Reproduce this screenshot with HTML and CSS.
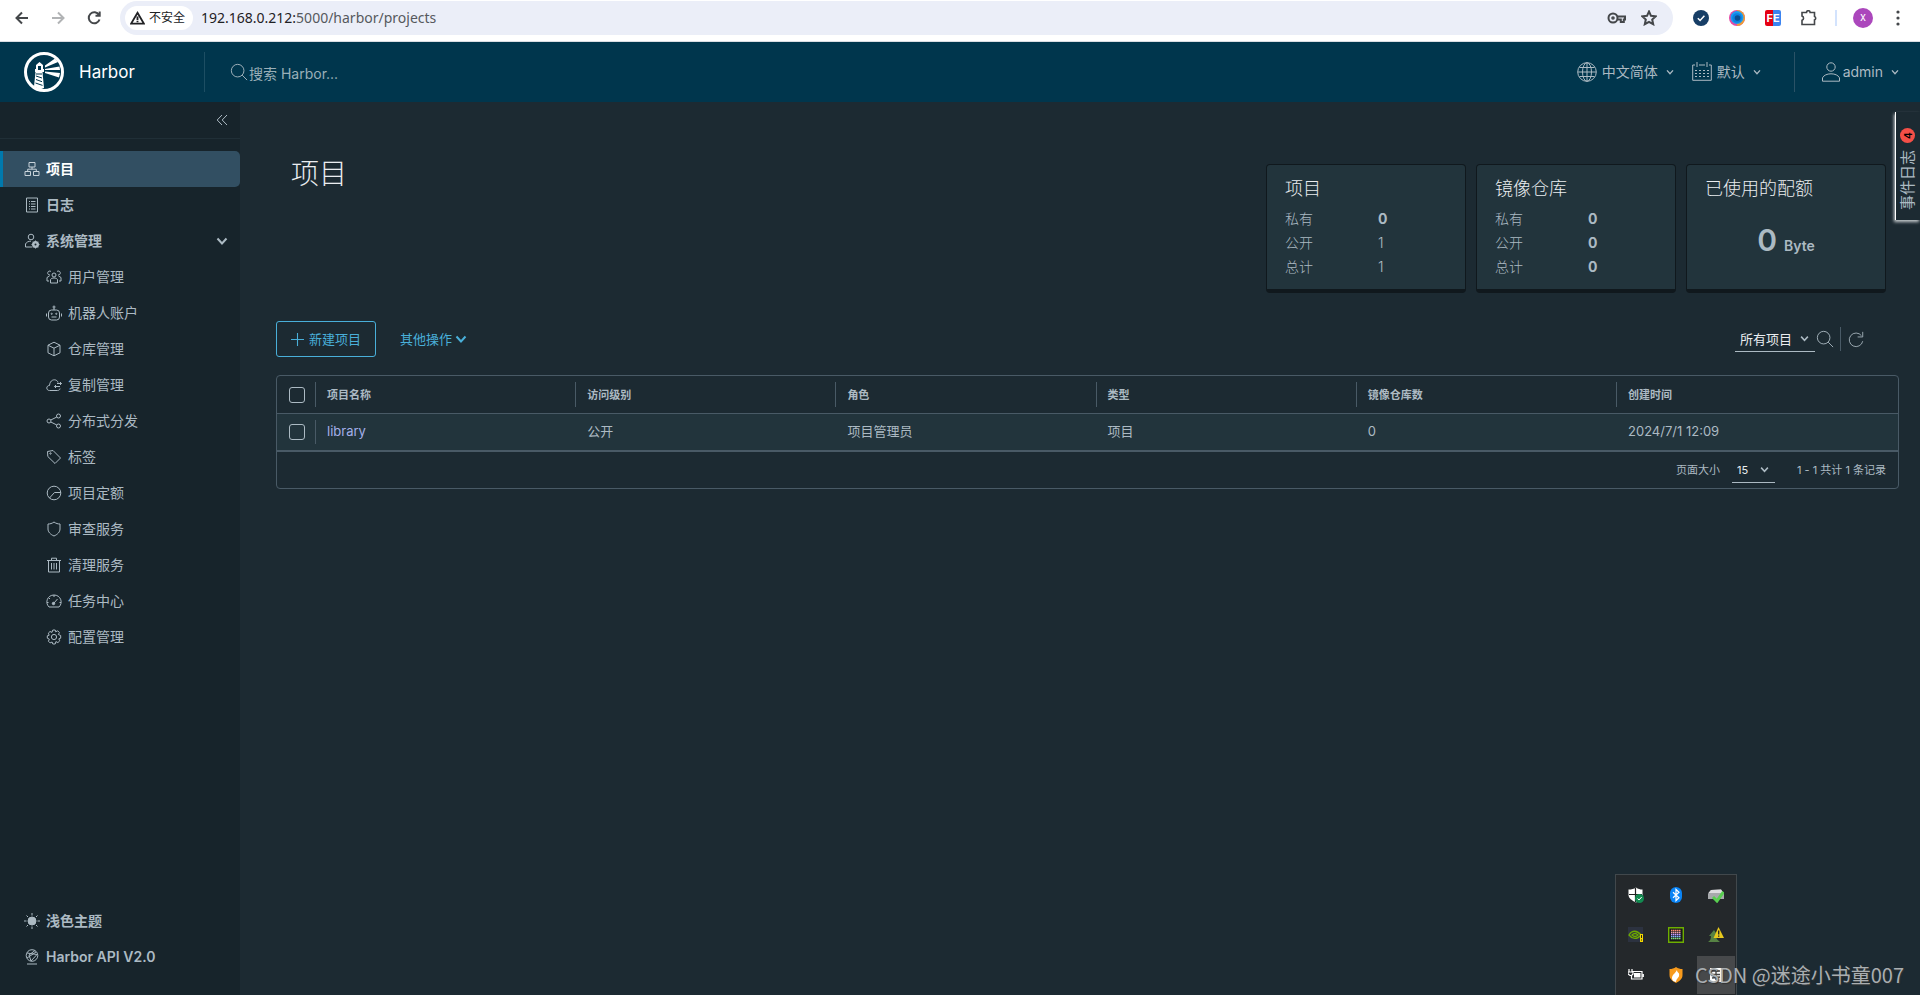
FILE: index.html
```html
<!DOCTYPE html>
<html lang="zh-CN">
<head>
<meta charset="utf-8">
<title>Harbor</title>
<link rel="stylesheet" href="styles.css">
</head>
<body>
<svg class="defs" aria-hidden="true">
  <symbol id="chev" viewBox="0 0 12 12"><path d="M1.5 3.5 6 8.5 10.500 3.500"/></symbol>
  <symbol id="search" viewBox="0 0 20 20"><circle cx="8.500" cy="8.500" r="7"/><path d="M13.500 13.500 19 19"/></symbol>
</svg>

<div class="browser">
  <button class="nav" aria-label="后退"><svg viewBox="0 0 16 16"><path d="M14 8H3M8 2.500 2.500 8 8 13.500"/></svg></button>
  <button class="nav off" aria-label="前进"><svg viewBox="0 0 16 16"><path d="M2 8h11M8 2.500 13.500 8 8 13.500"/></svg></button>
  <button class="nav" aria-label="刷新"><svg viewBox="0 0 16 16"><path d="M13 5A5.500 5.500 0 1 0 13.500 9.500M13.700 1.500v4.200H9.500"/></svg></button>
  <div class="omnibox">
    <button class="chip"><svg viewBox="0 0 16 14"><path d="M8 1.500 14.800 13H1.200ZM8 5.500v3.500M8 10v1.500"/></svg>不安全</button>
    <span class="url"><b>192.168.0.212:</b>5000/harbor/projects</span>
    <svg class="key" viewBox="0 0 20 14"><circle cx="6" cy="7" r="4.500"/><circle cx="6" cy="7" r=".8"/><path d="M10.500 5.500H18v3h-1.200V11h-3V8.500h-3.300"/></svg>
    <svg class="star" viewBox="0 0 16 16"><path d="m8 1.500 2 4.300 4.700.5-3.500 3.200 1 4.700L8 11.800l-4.200 2.400 1-4.700L1.300 6.300 6 5.800Z"/></svg>
  </div>
  <div class="exts">
    <svg viewBox="0 0 16 16"><circle cx="8" cy="8" r="8" fill="#173e66"/><path d="m4.800 8.200 2.300 2.300 4.300-4.700" stroke="#fff" stroke-width="1.500" fill="none"/></svg>
    <svg viewBox="0 0 16 16"><circle cx="8" cy="8" r="8" fill="#e34aa5"/><path d="M8 0a8 8 0 0 1 0 16Z" fill="#ee9c35"/><circle cx="8" cy="7.500" r="6.500" fill="#1d9bf0"/><circle cx="8" cy="8" r="4.800" fill="#0b7fe0"/><circle cx="8.500" cy="8" r="2.800" fill="#0a4d92"/></svg>
    <span class="fe">FE</span>
    <svg viewBox="0 0 16 16"><path d="M1 2.500h4.500a1.800 1.800 0 0 1 3.600 0h4.400v4a1.800 1.800 0 0 1 0 3.400v4.600H1v-4.200a2.200 2.200 0 0 0 0-4.200Z" stroke="#44474a" stroke-width="1.600" fill="none"/></svg>
    <i class="bar"></i>
    <span class="avatar">x</span>
    <svg class="dots" viewBox="0 0 4 16"><circle cx="2" cy="2" r="1.600"/><circle cx="2" cy="8" r="1.600"/><circle cx="2" cy="14" r="1.600"/></svg>
  </div>
</div>

<header class="top">
  <a class="brand" href="#">
    <svg class="logo" viewBox="0 0 40 40"><circle cx="20" cy="20" r="18.500" fill="none" stroke="#fff" stroke-width="3"/><path d="M11 17h1v-4l3.500-3 3.500 3v4h1v3h-1.500l1.500 16-4 1.500-6-3 1.500-14.500H11Z" fill="#fff"/><path d="M14 14h3v4h-3Z" fill="#00364d"/><path d="m12 24 6 2M12 27.500l6 2.200M11.500 31l7 2.400M12 22h6" stroke="#00364d"/><path d="M21 13.500 31 6.500l3 3.500L21 15.500ZM21 17l14.500-2.500.5 3.500H21ZM21 19.500 36 21l-1 4.500-14-4.500Z" fill="#fff"/></svg>
    <span>Harbor</span>
  </a>
  <label class="find"><svg><use href="#search"/></svg><input type="text" placeholder="搜索 Harbor..." aria-label="搜索 Harbor"></label>
  <div class="opts">
    <button><svg viewBox="0 0 20 20"><circle cx="10" cy="10" r="9.300"/><ellipse cx="10" cy="10" rx="4.500" ry="9.300"/><path d="M10 1v18M1 10h18M2.500 5.500h15M2.500 14.500h15"/></svg><span>中文简体</span><svg class="cv"><use href="#chev"/></svg></button>
    <button><svg viewBox="0 0 20 20"><path d="M3 3H.7v15.300h18.600V3H17M7 3h6M5 0v5M15 0v5"/><path stroke-dasharray="2 2" d="M3 8.500h14M3 11.500h14M3 14.500h14"/></svg><span>默认</span><svg class="cv"><use href="#chev"/></svg></button>
    <button class="user"><svg viewBox="0 0 20 20"><circle cx="10" cy="5" r="4.200"/><path d="M1.500 19.200v-3.400c1.200-2.500 4.500-4 8.500-4s7.300 1.500 8.500 4v3.400Z"/></svg><span>admin</span><svg class="cv"><use href="#chev"/></svg></button>
  </div>
</header>

<div class="body">
  <nav class="side">
    <button class="fold" aria-label="收起"><svg viewBox="0 0 12 12"><path d="M6 1 1.200 6 6 11M11 1 6.200 6 11 11"/></svg></button>
    <a class="item on" href="#"><svg viewBox="0 0 16 16"><path d="M5 1.500h6v4.500H5ZM1 10.500h5.500v4H1ZM9.500 10.500H15v4H9.500ZM8 6v2.200M3.700 10.500V8.200h8.600v2.300"/></svg>项目</a>
    <a class="item" href="#"><svg viewBox="0 0 16 16"><path d="M2.500 1h11v14h-11ZM5 4.500h1M5 7h1M5 9.500h1M5 12h1M7 4.500h4.500M7 7h4.500M7 9.500h4.500M7 12h4.500"/></svg>日志</a>
    <a class="item" href="#"><svg viewBox="0 0 16 16"><circle cx="7" cy="4" r="2.800"/><path d="M8 14H1.500v-3C2.500 9 4.500 8.200 7 8.200"/><circle cx="11.500" cy="11.500" r="2.500" stroke-width="2"/><path d="M11.500 7.500v8M7.500 11.500h8M8.800 8.800l5.400 5.400M14.200 8.800l-5.400 5.400"/><circle cx="11.500" cy="11.500" r="1" fill="#17242b" stroke="none"/></svg>系统管理<svg class="open"><use href="#chev"/></svg></a>
    <a class="item sub" href="#"><svg viewBox="0 0 16 16"><circle cx="8" cy="6" r="2"/><path d="M4.500 14v-3.500C5.500 9.300 6.500 9 8 9s2.500.3 3.500 1.500V14ZM5 2.500a2 2 0 1 0-1 3.500M11 2.500A2 2 0 1 1 12 6M3 12H1V8.500L3.500 7M13 12h2V8.500L12.500 7"/></svg>用户管理</a>
    <a class="item sub" href="#"><svg viewBox="0 0 16 16"><rect x="2.500" y="5" width="11" height="10" rx="3"/><path d="M8 5V3M.5 8.500v3M15.500 8.500v3M5.500 12h5"/><circle cx="8" cy="2" r="1"/><circle cx="5.700" cy="8.800" r=".6"/><circle cx="10.300" cy="8.800" r=".6"/></svg>机器人账户</a>
    <a class="item sub" href="#"><svg viewBox="0 0 16 16"><path d="m8 1.200 6 3v7.600l-6 3-6-3V4.200ZM2 4.200l6 3 6-3M8 7.200v7.600"/></svg>仓库管理</a>
    <a class="item sub" href="#"><svg viewBox="0 0 16 16"><path d="M14 11.500c0 1-1 2-2.500 2H3.500c-3.600 0-3.600-5 0-5C4 1.500 11 1.500 12 5.500M15.500 6.500H11M14 5l1.500 1.500L14 8M14 9.500H8.500M10 8 8.500 9.500 10 11"/></svg>复制管理</a>
    <a class="item sub" href="#"><svg viewBox="0 0 16 16"><circle cx="3" cy="8" r="2"/><circle cx="12.500" cy="3" r="2"/><circle cx="12.500" cy="13" r="2"/><path d="m4.800 7 6-3M4.800 9l6 3"/></svg>分布式分发</a>
    <a class="item sub" href="#"><svg viewBox="0 0 16 16"><path d="M1.500 2.500 7 1.500 14.500 9 9 14.500 1.800 7.500Z"/><circle cx="4.500" cy="4.500" r=".7"/></svg>标签</a>
    <a class="item sub" href="#"><svg viewBox="0 0 16 16"><circle cx="8" cy="8" r="6.800"/><path d="M14.800 7.500H8.500L3.500 13"/></svg>项目定额</a>
    <a class="item sub" href="#"><svg viewBox="0 0 16 16"><path d="M8 1c2 1.500 4 2 6 2v5c0 3-2.500 5.500-6 7-3.500-1.500-6-4-6-7V3c2 0 4-.5 6-2Z"/></svg>审查服务</a>
    <a class="item sub" href="#"><svg viewBox="0 0 16 16"><path d="M1 3.500h14M5.500 3.500V1.200h5v2.300M2.500 3.500V15h11V3.500M5.500 6v6.500M8 6v6.500M10.500 6v6.500"/></svg>清理服务</a>
    <a class="item sub" href="#"><svg viewBox="0 0 16 16"><path d="M3 14C-1.500 9.500 1.500 2 8 2s9.500 7.500 5 12ZM8 2v2M3 5l1 1M1 9.500h1.500M13.500 9.500H15M8 10l3.500-4"/><circle cx="7.500" cy="10.500" r="1.200" fill="#acbac3"/></svg>任务中心</a>
    <a class="item sub" href="#"><svg viewBox="0 0 16 16"><circle cx="8" cy="8" r="2.600"/><path d="m6.800 1 2.400 0 .5 1.800 2-1 1.700 1.700-1 2L14.700 6.500v2.700l-1.900.7 1 1.900-1.900 1.800-2-1L9.200 15H6.800l-.7-2-2 .9-1.700-1.700 1-2L1.300 9.200V6.800l1.900-.6-.9-2 1.700-1.700 2 .9Z"/></svg>配置管理</a>
    <div class="foot">
      <a class="item" href="#"><svg viewBox="0 0 16 16"><circle cx="8" cy="8" r="4" fill="#acbac3"/><path d="M8 0v2.500M8 13.500V16M0 8h2.500M13.500 8H16M2.500 2.500 4 4M12 12l1.500 1.500M13.500 2.500 12 4M4 12l-1.500 1.500"/></svg>浅色主题</a>
      <a class="item" href="#"><svg viewBox="0 0 16 16"><circle cx="8" cy="6.500" r="5.800"/><path d="m3 4 10 1.500-6 6.500L5 6l6-4.500M3 9l9-6M3 15h10"/></svg>Harbor API V2.0</a>
    </div>
  </nav>

  <main class="main">
    <section class="head">
      <h1>项目</h1>
      <div class="cards">
        <div class="card"><h2>项目</h2><dl><dt>私有</dt><dd><b>0</b></dd><dt>公开</dt><dd>1</dd><dt>总计</dt><dd>1</dd></dl></div>
        <div class="card"><h2>镜像仓库</h2><dl><dt>私有</dt><dd><b>0</b></dd><dt>公开</dt><dd><b>0</b></dd><dt>总计</dt><dd><b>0</b></dd></dl></div>
        <div class="card"><h2>已使用的配额</h2><p class="quota"><b>0</b><span>Byte</span></p></div>
      </div>
    </section>
    <section class="tools">
      <button class="new"><svg viewBox="0 0 12 12"><path d="M6 0v12M0 6h12"/></svg>新建项目</button>
      <button class="more">其他操作<svg><use href="#chev"/></svg></button>
      <div class="filter">
        <span class="pick"><select aria-label="项目范围"><option>所有项目</option></select><svg><use href="#chev"/></svg></span>
        <button class="ic" aria-label="搜索"><svg><use href="#search"/></svg></button>
        <button class="ic again" aria-label="刷新"><svg viewBox="0 0 20 20"><path d="M17 5.500A8 8 0 1 0 18.500 12M18.500 1v6H12.500"/></svg></button>
      </div>
    </section>
    <section class="grid">
      <table>
        <thead><tr><th class="ck"><input type="checkbox" aria-label="全选"></th><th>项目名称</th><th>访问级别</th><th>角色</th><th>类型</th><th>镜像仓库数</th><th class="last">创建时间</th></tr></thead>
        <tbody><tr><td class="ck"><input type="checkbox" aria-label="选择 library"></td><td class="first"><a href="#">library</a></td><td>公开</td><td>项目管理员</td><td>项目</td><td>0</td><td>2024/7/1 12:09</td></tr></tbody>
      </table>
      <div class="pager">
        <label for="size">页面大小</label>
        <span class="pick small"><select id="size"><option>15</option></select><svg><use href="#chev"/></svg></span>
        <span>1 - 1 共计 1 条记录</span>
      </div>
    </section>
  </main>
</div>

<button class="events"><span>事件日志</span><em>4</em></button>

<div class="tray">
  <i><svg viewBox="0 0 16 16"><path d="M8 .5c2 1.500 4 2 6.500 2V8c0 3-2.500 5.500-6.500 7.500C4 13.500.5 11 .5 8V2.500C3.500 2.500 6 2 8 .5Z" fill="#fff"/><path d="M7.500 1v14M1 7.500h13" stroke="#222" stroke-width="1.200"/><circle cx="11.500" cy="11.500" r="4.500" fill="#128a50"/><path d="m9.500 11.500 1.500 1.500 2.700-3" stroke="#fff" fill="none"/></svg></i>
  <i><svg viewBox="0 0 16 16"><rect x="2" width="12" height="16" rx="6" fill="#0a84f5"/><path d="m5 5.200 6 5.500L8 13.500v-11l3 2.800-6 5.500" stroke="#fff" fill="none" stroke-width="1.200"/></svg></i>
  <i><svg viewBox="0 0 16 16"><path d="m3 3 10-.5 3 4V12H0V6.500Z" fill="#a7a9ac"/><path d="m3 3 10-.5 2.500 3.500H.5Z" fill="#dcdcde"/><path d="m5 10 4 4 6.500-9" stroke="#58cf50" stroke-width="3" fill="none"/></svg></i>
  <i><svg viewBox="0 0 16 16"><path d="M0 0h15v15H0Z" fill="#2c3240"/><path d="M1 8c3-5 8-5 12 0-4 5-9 4-12 0ZM4 8c2-2 4-2 6 0-2 2-4 2-6 0Z" stroke="#6da800" stroke-width="1.300" fill="none"/><path d="M12 7h3v8h-3Z" fill="#f4d800"/><path d="M13.500 8v3M13.500 12.500v1" stroke="#222"/></svg></i>
  <i><svg viewBox="0 0 16 16"><path d="M.7.7h14.600v14.600H.7Z" stroke="#6eae00" stroke-width="1.400" fill="#17181a"/><path d="M3 3.500h10" stroke="#ff8d73" stroke-width="1.500" stroke-dasharray="1.500 .5"/><path d="M3 5.500h10" stroke="#f0a0a8" stroke-width="1.500" stroke-dasharray="1.500 .5"/><path d="M3 7.500h10" stroke="#c59bff" stroke-width="1.500" stroke-dasharray="1.500 .5"/><path d="M3 9.500h10" stroke="#84b0ff" stroke-width="1.500" stroke-dasharray="1.500 .5"/><path d="M3 11.500h10" stroke="#83dc7c" stroke-width="1.500" stroke-dasharray="1.500 .5"/></svg></i>
  <i><svg viewBox="0 0 16 16"><path d="M1 9 6 3l4 6H8c0 3 2 4 4 6H0c2-1 3-3 3-6Z" fill="#568244"/><path d="M10.500 0 16 11H5.500Z" fill="#e8c91d"/><path d="M10.700 3.500v4M10.700 8.500v1.300" stroke="#222" stroke-width="1.300"/></svg></i>
  <i><svg viewBox="0 0 16 16"><path d="M4.500 4.500h9.500v7.500H4M15.300 7v3M1 2v3M4 2v3M0 5h5v2L3.500 8.500v4M0 5v2l2 1.500h1.500" stroke="#fff" stroke-width="1.200" fill="none"/><path d="M6 6h6.500v4.500H6Z" fill="#fff"/></svg></i>
  <i><svg viewBox="0 0 16 16"><path d="M8 0c2 1.500 4 2 6.500 2v6c0 4-3 6-6.500 8-3.500-2-6.500-4-6.500-8V2C4 2 6 1.500 8 0Z" fill="#f79a1c"/><path d="M5 14C2 9 6 8 9 3c0 3 3 2 2 6-.5 2-2.500 2.500-3 6Z" fill="#fff"/></svg></i>
  <i class="hot"><svg viewBox="0 0 16 16"><path d="M2 1h12v14H2Z" fill="#fff"/><path d="M4 4h8M8 2v11M4 7.500h8M4 11l8-1" stroke="#444" stroke-width="1.400"/></svg></i>
</div>
<div class="mark">CSDN @迷途小书童007</div>
</body>
</html>
```
FILE: styles.css
```css
* { box-sizing: border-box; }
body {
  margin: 0;
  min-height: 100vh;
  display: flex;
  flex-direction: column;
  overflow: hidden;
  background: #1c2a32;
  color: #acbac3;
  font: 14px/20px Inter, "Noto Sans CJK SC", sans-serif;
}
button, select, input { font: inherit; color: inherit; background: none; border: 0; padding: 0; margin: 0; }
a { color: inherit; text-decoration: none; }
svg { fill: none; stroke: currentColor; flex: none; }
h1, h2, p, dl, dd { margin: 0; font-weight: 300; }
.defs { position: absolute; width: 0; height: 0; }

/* browser toolbar */
.browser {
  height: 42px;
  padding: 1px 20px 6px 14px;
  display: flex;
  align-items: center;
  gap: 20px;
  background: #fff;
  border-bottom: 1px solid #d9dde2;
  color: #44474a;
}
.nav { display: flex; width: 16px; }
.nav svg { width: 16px; height: 16px; stroke-width: 2; }
.nav.off { color: #b1b3b5; }
.omnibox {
  flex: 1;
  height: 34px;
  margin-left: -2px;
  padding: 0 16px 0 5px;
  display: flex;
  align-items: center;
  border-radius: 17px;
  background: #ebeef8;
}
.chip {
  height: 24px;
  padding: 0 8px 0 5px;
  display: flex;
  align-items: center;
  gap: 4px;
  border-radius: 12px;
  background: #fff;
  color: #202124;
  font-size: 12px;
}
.chip svg { width: 15px; height: 14px; stroke-width: 2; }
.url { flex: 1; margin-left: 8px; font: 14px/20px "Noto Sans", sans-serif; color: #56595d; }
.url b { font-weight: 400; color: #1f2124; }
.key { width: 20px; height: 14px; margin-right: 14px; stroke-width: 2; }
.star { width: 16px; height: 16px; stroke-width: 2; }
.exts { display: flex; align-items: center; gap: 20px; }
.exts svg { width: 16px; height: 16px; stroke: none; }
.exts .dots { width: 4px; fill: #44474a; margin-left: 3px; }
.fe {
  width: 16px;
  height: 16px;
  border-radius: 2px;
  background: linear-gradient(90deg, #e60012 50%, #3c84f0 50%);
  color: #fff;
  font: 700 11px/16px Inter, sans-serif;
  text-align: center;
}
.bar { width: 2px; height: 16px; margin: 0 -4px 0 -2px; background: #d3e3fd; }
.avatar {
  width: 20px;
  height: 20px;
  border-radius: 50%;
  background: #ab47bc;
  color: #fff;
  font-size: 11px;
  line-height: 19px;
  text-align: center;
}

/* application header */
.top { height: 60px; display: flex; align-items: center; background: #00364d; }
.brand {
  width: 205px;
  height: 40px;
  padding-left: 24px;
  display: flex;
  align-items: center;
  gap: 15px;
  border-right: 1px solid #1d4e63;
  color: #fff;
  font-size: 17px;
}
.logo { width: 40px; height: 40px; stroke: none; }
.find { flex: 1; display: flex; align-items: center; gap: 1px; margin-left: 25px; }
.find svg { width: 18px; height: 18px; }
.find input { width: 200px; height: 24px; outline: 0; margin-top: 3px; }
.find input::placeholder { color: #9aafb8; opacity: 1; }
.opts { display: flex; align-items: center; }
.opts button { display: flex; align-items: center; gap: 5px; margin-right: 18px; height: 40px; }
.opts svg { width: 20px; height: 20px; }
.opts .cv { width: 8px; height: 8px; margin-left: 3px; stroke-width: 2; }
.opts .user { gap: 2px; margin: 0 0 0 15px; padding: 0 21px 0 26px; border-left: 1px solid #2a5266; }
.opts .user .cv { margin-left: 6px; }

/* sidebar */
.body { flex: 1; display: flex; }
.side { width: 240px; flex: none; display: flex; flex-direction: column; background: #17242b; }
.fold {
  height: 37px;
  margin-bottom: 12px;
  padding-right: 12px;
  display: flex;
  align-items: center;
  justify-content: flex-end;
  border-bottom: 1px solid #202f37;
}
.fold svg { width: 12px; height: 12px; }
.item { height: 36px; padding-left: 24px; display: flex; align-items: center; gap: 6px; font-weight: 600; }
.item svg { width: 16px; height: 16px; }
.item .open { width: 12px; height: 12px; margin-left: auto; margin-right: 12px; stroke-width: 2; }
.on { padding-left: 21px; border-left: 3px solid #0079ad; border-radius: 0 5px 5px 0; background: #324f62; color: #fff; }
.on svg { color: #c7d2d9; }
.sub { padding-left: 46px; font-weight: 400; }
.foot { margin-top: auto; padding-bottom: 20px; }

/* content */
.main { flex: 1; min-width: 0; padding: 50px 21px 0 36px; }
.head { display: flex; justify-content: space-between; padding: 0 13px 0 15px; }
h1 { font-size: 28px; line-height: 44px; color: #eaedf0; }
.cards { display: flex; gap: 10px; margin-top: 12px; }
.card {
  width: 200px;
  height: 129px;
  padding: 12px 18px;
  border: 1px solid #10181d;
  border-bottom-width: 4px;
  border-radius: 4px;
  background: #22343c;
}
.card h2 { font-size: 18px; line-height: 24px; color: #eaedf0; }
.card dl { display: grid; grid-template-columns: 93px 1fr; margin-top: 6px; line-height: 24px; }
.card dd b { font-weight: 700; }
.quota { display: flex; justify-content: center; align-items: baseline; gap: 7px; margin-top: 23px; line-height: 32px; font-weight: 600; }
.quota b { font-size: 30px; font-weight: 600; }

.tools { display: flex; align-items: center; margin-top: 28px; font-size: 13px; }
.new {
  height: 36px;
  padding: 0 14px;
  display: flex;
  align-items: center;
  gap: 5px;
  border: 1px solid #49afd9;
  border-radius: 3px;
  color: #49afd9;
}
.new svg { width: 13px; height: 13px; }
.more { display: flex; align-items: center; gap: 3px; margin-left: 24px; color: #49afd9; }
.more svg { width: 12px; height: 12px; stroke-width: 2; }
.filter { display: flex; align-items: center; margin-left: auto; margin-right: 35px; }
.pick { position: relative; display: block; border-bottom: 1px solid #acbac3; color: #eaedf0; }
.pick select { width: 80px; height: 24px; padding-left: 5px; appearance: none; outline: 0; display: block; }
.pick svg { position: absolute; right: 6px; top: 7px; width: 9px; height: 9px; stroke-width: 2; color: #acbac3; pointer-events: none; }
.ic { display: flex; padding: 0 6px 0 1px; }
.ic svg { width: 18px; height: 18px; }
.again { height: 24px; align-items: center; padding: 0 0 0 6px; border-left: 1px solid #495a66; }
.again svg { width: 17px; height: 17px; }

.grid { margin-top: 18px; border: 1px solid #495a66; border-radius: 4px; }
table { width: 100%; table-layout: fixed; border-spacing: 0; font-size: 13px; }
th, td { position: relative; height: 37px; padding: 0 0 0 12px; text-align: left; }
th { font-size: 11px; font-weight: 600; }
th.last { width: 282px; }
.ck { width: 38px; }
th + th::before, td.first::before { content: ""; position: absolute; left: 0; top: 6px; bottom: 6px; width: 1px; background: #495a66; }
td { background: #22343c; border-top: 1px solid #495a66; border-bottom: 2px solid #495a66; height: 39px; padding-bottom: 2px; }
td.ck { padding-bottom: 0; }
td a { color: #a5b0ea; }
input[type="checkbox"] { appearance: none; display: block; width: 16px; height: 16px; border: 1px solid #acbac3; border-radius: 3px; }
.pager { height: 36px; padding-right: 12px; display: flex; align-items: center; justify-content: flex-end; font-size: 11px; }
.small { margin: 0 22px 0 12px; }
.small select { width: 43px; }

/* floating pieces */
.events {
  position: absolute;
  right: 0;
  top: 112px;
  width: 25px;
  height: 108px;
  padding: 10px 0 16px;
  display: flex;
  align-items: center;
  justify-content: space-between;
  writing-mode: vertical-rl;
  text-orientation: sideways;
  transform: rotate(180deg);
  border-right: 1px solid #fff;
  box-shadow: 1px -2px 3px #c4c9cc;
  background: #1c2a32;
  font-size: 15px;
}
.events em { width: 15px; height: 15px; border-radius: 50%; background: #f54f47; color: #000; font: 600 10px/15px Inter, sans-serif; text-align: center; }
.tray {
  position: absolute;
  right: 183px;
  bottom: 0;
  display: grid;
  grid-template-columns: repeat(3, 40px);
  grid-auto-rows: 40px;
  height: 121px;
  border: 1px solid #41484c;
  border-bottom: 0;
  background: #24282b;
  overflow: hidden;
}
.tray i { display: flex; align-items: center; justify-content: center; }
.tray svg { width: 16px; height: 16px; stroke: none; }
.tray .hot { margin: 1px; background: #47494b; }
.mark { position: absolute; right: 16px; bottom: 6px; font-family: "Noto Sans CJK SC", sans-serif; font-size: 20px; line-height: 28px; color: #a9aeb1; text-shadow: 1px 1px 1px #333; }
```
